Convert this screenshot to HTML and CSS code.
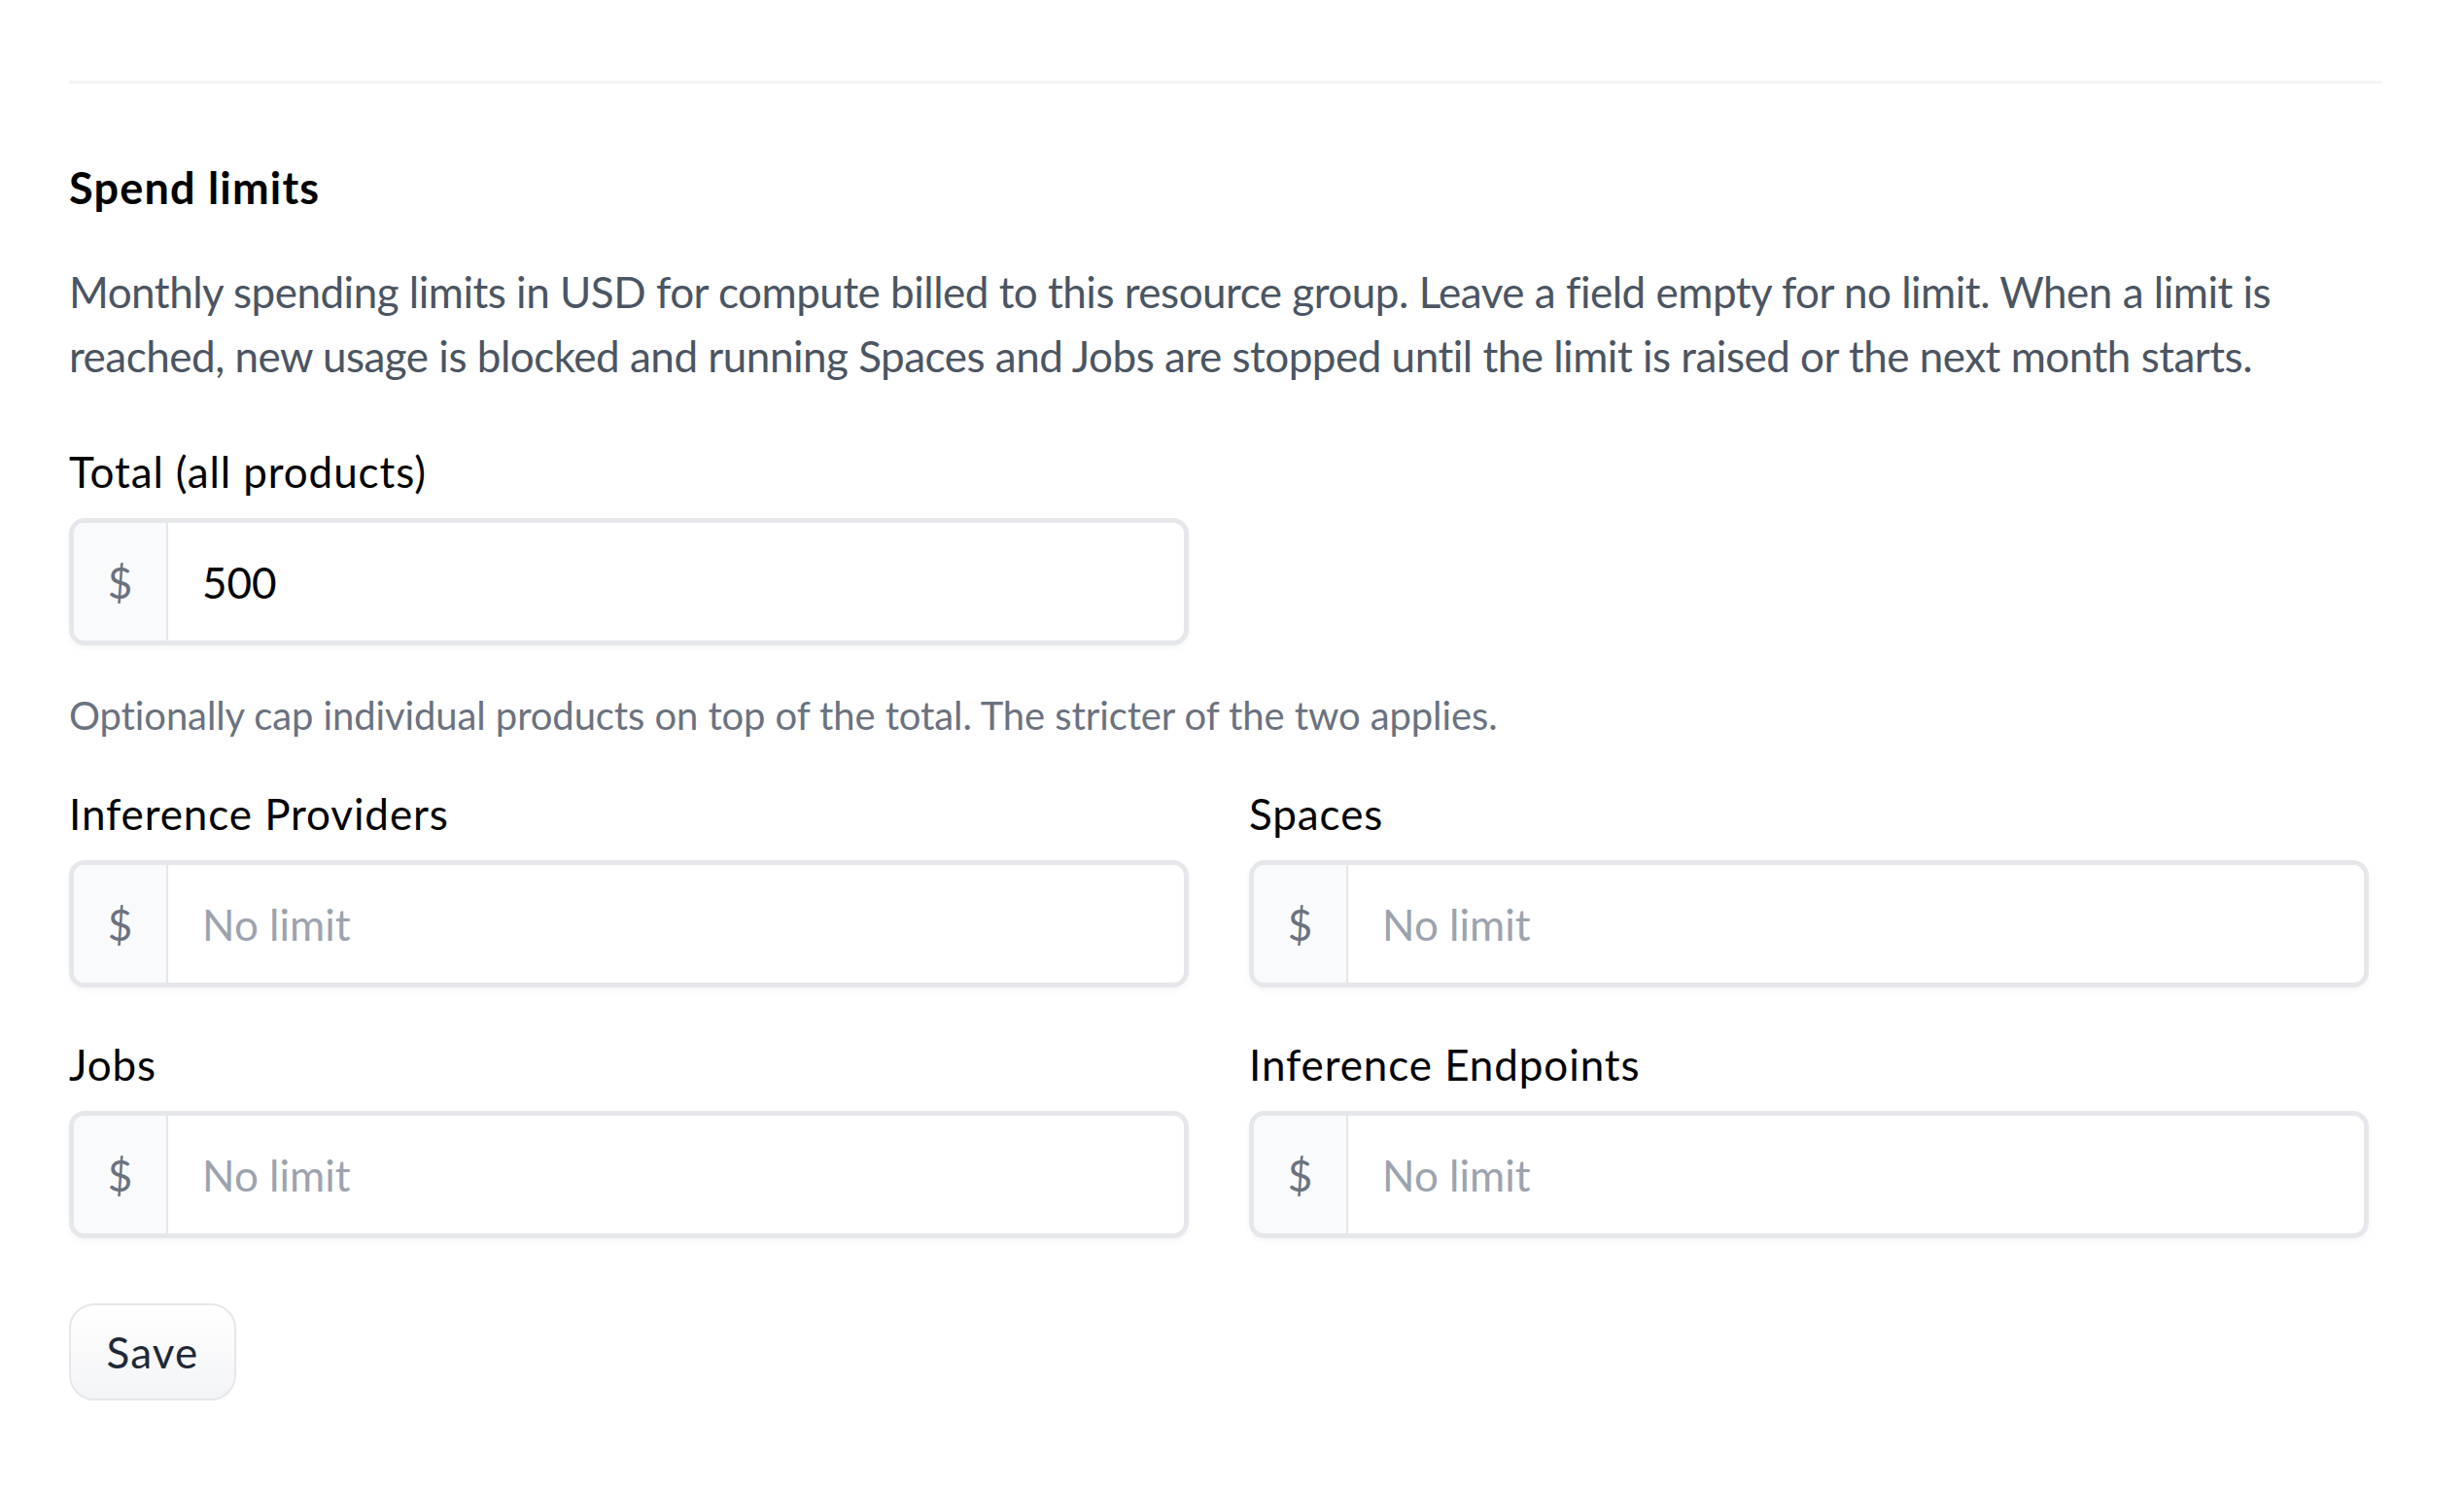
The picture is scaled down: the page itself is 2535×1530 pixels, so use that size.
FILE: index.html
```html
<!DOCTYPE html>
<html lang="en">
<head>
    <meta charset="UTF-8">
    <meta name="viewport" content="width=device-width, initial-scale=1.0">
    <title>Spend limits</title>
    <link rel="stylesheet" href="styles.css">
</head>
<body>
    <main class="page">
        <hr class="divider">

        <section class="spend">
            <h2 class="spend-title">Spend limits</h2>
            <p class="spend-desc">Monthly spending limits in USD for compute billed to this resource group. Leave a field empty for no limit. When a limit is reached, new usage is blocked and running Spaces and Jobs are stopped until the limit is raised or the next month starts.</p>

            <div class="field field-total">
                <label class="field-label" for="limit-total">Total (all products)</label>
                <div class="money-input">
                    <span class="money-prefix">$</span>
                    <input id="limit-total" type="text" value="500">
                </div>
            </div>

            <p class="spend-hint">Optionally cap individual products on top of the total. The stricter of the two applies.</p>

            <div class="field-grid">
                <div class="field">
                    <label class="field-label" for="limit-inference">Inference Providers</label>
                    <div class="money-input">
                        <span class="money-prefix">$</span>
                        <input id="limit-inference" type="text" placeholder="No limit">
                    </div>
                </div>
                <div class="field">
                    <label class="field-label" for="limit-spaces">Spaces</label>
                    <div class="money-input">
                        <span class="money-prefix">$</span>
                        <input id="limit-spaces" type="text" placeholder="No limit">
                    </div>
                </div>
                <div class="field">
                    <label class="field-label" for="limit-jobs">Jobs</label>
                    <div class="money-input">
                        <span class="money-prefix">$</span>
                        <input id="limit-jobs" type="text" placeholder="No limit">
                    </div>
                </div>
                <div class="field">
                    <label class="field-label" for="limit-endpoints">Inference Endpoints</label>
                    <div class="money-input">
                        <span class="money-prefix">$</span>
                        <input id="limit-endpoints" type="text" placeholder="No limit">
                    </div>
                </div>
            </div>

            <button class="btn-save" type="button">Save</button>
        </section>
    </main>
</body>
</html>
```

FILE: styles.css
```css
body {
    margin: 0;
    background: #ffffff;
    font-family: Lato, "Noto Sans", sans-serif;
    color: #000000;
}
.page {
    padding: 83px 84px 0 71px;
}
.divider {
    margin: 0;
    border: 0;
    border-top: 3px solid #f3f4f6;
}
.spend {
    font-size: 44px;
    line-height: 66px;
}
.spend-title {
    margin: 74px 0 0;
    font-size: 45px;
    font-weight: 700;
    line-height: 66px;
    letter-spacing: 1.2px;
}
.spend-desc {
    margin: 41px 0 0;
    color: #4b5563;
    letter-spacing: -0.5px;
}
.field-total {
    width: 1152px;
    margin-top: 53px;
}
.field-label {
    display: block;
    margin-bottom: 15px;
    letter-spacing: 0.9px;
}
.money-input {
    display: flex;
    height: 121px;
    border: 5px solid #e5e7eb;
    border-radius: 16px;
    overflow: hidden;
    background: #ffffff;
    box-shadow: 0 3px 6px rgba(17, 24, 39, 0.04);
}
.money-prefix {
    display: flex;
    align-items: center;
    justify-content: center;
    width: 95px;
    flex: none;
    background: #f9fafb;
    border-right: 2px solid #e5e7eb;
    color: #6b7280;
}
.money-input input {
    flex: 1;
    min-width: 0;
    border: 0;
    outline: none;
    padding: 0 0 0 35px;
    background: transparent;
    font: inherit;
    color: #000000;
}
.money-input input::placeholder {
    color: #9ca3af;
}
.spend-hint {
    margin: 42px 0 0;
    font-size: 40px;
    line-height: 60px;
    color: #6b7280;
    letter-spacing: -0.1px;
}
.field-grid {
    display: grid;
    grid-template-columns: 1152px 1152px;
    column-gap: 62px;
    row-gap: 46px;
    margin-top: 38px;
}
.btn-save {
    margin-top: 67px;
    width: 172px;
    height: 100px;
    padding: 0;
    border: 2px solid #e5e7eb;
    border-radius: 26px;
    background: linear-gradient(#ffffff, #f3f4f6);
    font: inherit;
    letter-spacing: 1.2px;
    color: #1f2937;
    cursor: pointer;
}
```
